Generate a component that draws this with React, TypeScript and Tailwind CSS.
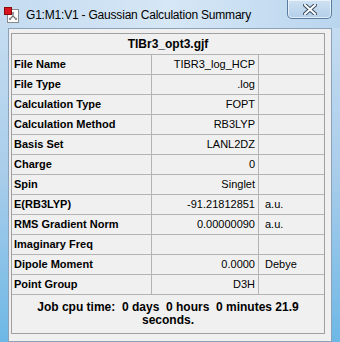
import React from 'react';

const rows: [string, string, string][] = [
  ['File Name', 'TIBR3_log_HCP', ''],
  ['File Type', '.log', ''],
  ['Calculation Type', 'FOPT', ''],
  ['Calculation Method', 'RB3LYP', ''],
  ['Basis Set', 'LANL2DZ', ''],
  ['Charge', '0', ''],
  ['Spin', 'Singlet', ''],
  ['E(RB3LYP)', '-91.21812851', 'a.u.'],
  ['RMS Gradient Norm', '0.00000090', 'a.u.'],
  ['Imaginary Freq', '', ''],
  ['Dipole Moment', '0.0000', 'Debye'],
  ['Point Group', 'D3H', ''],
];

function AppIcon() {
  return (
    <svg width="16" height="16" viewBox="0 0 16 16">
      <rect x="3.5" y="2.5" width="11" height="13" fill="#fff" stroke="#8a8a8a" />
      <path d="M9 6 L9 9 L6 12 M9 9 L12 12" stroke="#707070" strokeWidth="1.2" fill="none" />
      <circle cx="9" cy="6" r="1.2" fill="#909090" />
      <circle cx="6" cy="12" r="1.2" fill="#909090" />
      <circle cx="12" cy="12" r="1.2" fill="#909090" />
      <rect x="0.5" y="0.5" width="7" height="7" fill="#d8141c" stroke="#8a0a0a" />
    </svg>
  );
}

export default function App() {
  return (
    <div
      className="w-[340px] h-[342px] overflow-hidden flex flex-col bg-gradient-to-b from-[#c9dff2] via-[#a9cdea] to-[#6db8e6]"
      style={{ fontFamily: '"Liberation Sans", Arial, sans-serif' }}
    >
      {/* Title bar */}
      <div className="h-[28px] flex items-start relative bg-gradient-to-r from-[#c4dbf0] via-[#d6e7f6] to-[#b9d5ee]">
        <div className="mt-[7px] ml-[4px]">
          <AppIcon />
        </div>
        <span className="mt-[7px] ml-[6px] text-[12px] leading-[16px] text-black tracking-[-0.2px]">
          G1:M1:V1 - Gaussian Calculation Summary
        </span>
        <div className="absolute left-[287px] top-0 w-[45px] h-[19px] rounded-b-[5px] border border-t-0 border-[#5a7c9e] bg-gradient-to-b from-[#cfe2f3] to-[#b3cfe9] flex items-center justify-center shadow-[inset_0_0_0_1px_rgba(255,255,255,0.6)]">
          <svg width="14" height="11" viewBox="0 0 14 11">
            <path d="M2 1 L12 10 M12 1 L2 10" stroke="#3b4f66" strokeWidth="4" strokeLinecap="square" />
            <path d="M2 1 L12 10 M12 1 L2 10" stroke="#ffffff" strokeWidth="2" strokeLinecap="square" />
          </svg>
        </div>
      </div>

      {/* Client area */}
      <div className="flex-1 flex pl-[8px] pr-[8px]">
        <div className="flex-1 bg-[#f0f0f0] border border-[#8da2b8] pt-[4px] pl-[2px] pr-[6px]">
          <div className="border border-[#a0a0a0] bg-[#f0f0f0] w-[314px]">
            <div className="h-[21px] border-b border-[#b4b4b4] flex items-center justify-center text-[12px] font-bold text-black">
              TlBr3_opt3.gjf
            </div>
            {rows.map(([label, value, unit]) => (
              <div key={label} className="grid grid-cols-[140px_107px_1fr] h-[20px] border-b border-[#b4b4b4] text-[11px] text-black">
                <div className="border-r border-[#b4b4b4] flex items-center pl-[2px] font-bold">{label}</div>
                <div className="border-r border-[#b4b4b4] flex items-center justify-end pr-[3px]">{value}</div>
                <div className="flex items-center pl-[6px]">{unit}</div>
              </div>
            ))}
            <div className="h-[38px] flex flex-col items-center justify-center text-[12px] leading-[13px] font-bold text-black whitespace-pre">
              <span>Job cpu time:  0 days  0 hours  0 minutes 21.9</span>
              <span>seconds.</span>
            </div>
          </div>
        </div>
      </div>
    </div>
  );
}
